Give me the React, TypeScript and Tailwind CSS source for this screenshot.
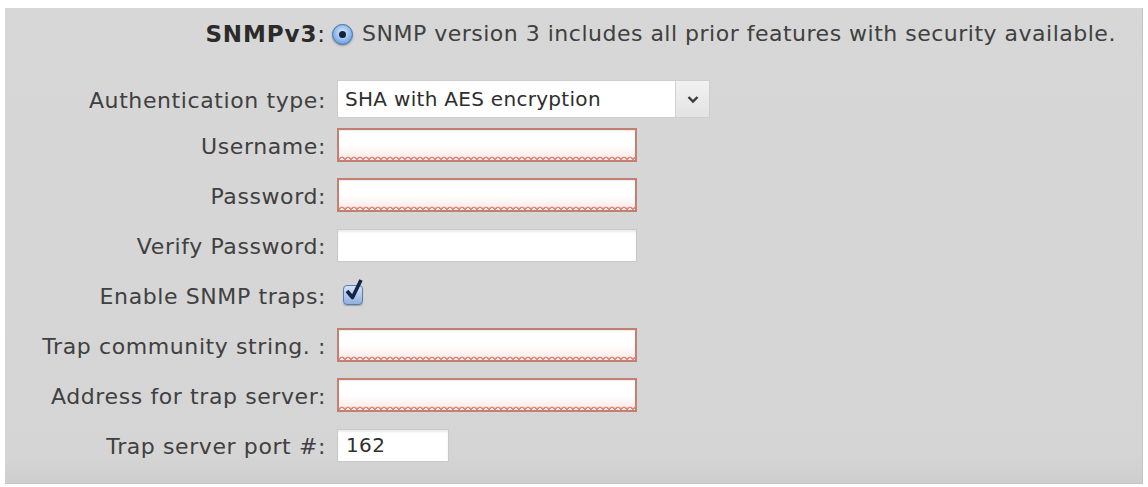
import type { ReactNode } from 'react';

const font = "font-['DejaVu_Sans','Liberation_Sans',sans-serif]";

function Label({ children }: { children: ReactNode }) {
  return (
    <div className="flex justify-end pt-[4px] text-[22px] leading-none tracking-[0.6px] text-[#404040] whitespace-nowrap">
      {children}
    </div>
  );
}

function InvalidInput() {
  return (
    <div className="relative h-[34px] w-[300px] border-2 border-[#c47f73] bg-[linear-gradient(to_bottom,#ffffff_50%,#fbe9e7_100%)] shadow-[inset_0_1px_1px_rgba(0,0,0,0.08)]">
      <input
        readOnly
        className="h-full w-full bg-transparent px-2 outline-none"
        aria-invalid="true"
      />
      <div className="absolute inset-x-0 bottom-0 h-[5px] bg-[radial-gradient(circle_at_50%_100%,transparent_1.8px,#e07d6d_2px,#e07d6d_3.4px,transparent_3.6px)] bg-[length:6px_5px] opacity-90" />
    </div>
  );
}

function PlainInput({ value, width }: { value?: string; width: string }) {
  return (
    <div className={`h-[33px] ${width} border border-[#c9c9c9] bg-white shadow-[inset_0_2px_2px_rgba(0,0,0,0.08)]`}>
      <input
        readOnly
        value={value ?? ''}
        className={`h-full w-full bg-transparent px-2 text-[20px] tracking-[0.4px] text-[#303030] outline-none ${font}`}
      />
    </div>
  );
}

function Row({ label, children }: { label: ReactNode; children: ReactNode }) {
  return (
    <div className="grid h-[50px] grid-cols-[321px_1fr] items-center gap-x-[11px]">
      <Label>{label}</Label>
      <div className="flex items-center">{children}</div>
    </div>
  );
}

export default function App() {
  return (
    <div className={`h-[487px] w-[1148px] bg-white px-[5px] pt-[8px] ${font}`}>
      <div className="h-[476px] border-r border-b border-[#c4c4c4] bg-[linear-gradient(to_bottom,#d7d7d7_0%,#d5d5d5_94%,#cecece_100%)] pt-[9px]">
        <div className="grid h-[34px] grid-cols-[321px_1fr] items-center gap-x-[6px]">
          <div className="flex justify-end text-[23px] font-bold leading-none tracking-[0.9px] text-[#2b2b2b]">
            SNMPv3<span className="font-normal">:</span>
          </div>
          <div className="flex items-center gap-[9px]">
            <div className="flex h-[21px] w-[21px] items-center justify-center rounded-full border border-[#3f6fa8] bg-[radial-gradient(circle_at_50%_40%,#dcecff_0%,#8db8ea_55%,#4a86cf_100%)] shadow-[0_1px_2px_rgba(0,0,0,0.3)]">
              <div className="h-[7px] w-[7px] rounded-full bg-[#142238]" />
            </div>
            <span className="text-[22px] leading-none tracking-[0.5px] text-[#404040] whitespace-nowrap">
              SNMP version 3 includes all prior features with security available.
            </span>
          </div>
        </div>

        <div className="mt-[29px] mb-[2px] grid h-[38px] grid-cols-[321px_1fr] items-center gap-x-[11px]">
          <Label>Authentication type:</Label>
          <div className="flex h-[38px] w-[373px] border border-[#cdcdcd] bg-white">
            <div className="flex flex-1 items-center pl-[7px] text-[20px] tracking-[0.3px] text-[#2e2e2e]">
              SHA with AES encryption
            </div>
            <div className="flex w-[34px] items-center justify-center border-l border-[#d2d2d2] bg-[linear-gradient(to_bottom,#f2f2f2,#e3e3e3)]">
              <svg width="12" height="9" viewBox="0 0 12 9">
                <path d="M1.5 2 L6 6.5 L10.5 2" fill="none" stroke="#3a3a3a" strokeWidth="2.4" />
              </svg>
            </div>
          </div>
        </div>

        <Row label="Username:">
          <InvalidInput />
        </Row>
        <Row label="Password:">
          <InvalidInput />
        </Row>
        <Row label="Verify Password:">
          <PlainInput width="w-[300px]" />
        </Row>
        <Row label="Enable SNMP traps:">
          <div className="relative ml-[6px] h-[20px] w-[20px]">
            <div className="h-[20px] w-[20px] rounded-[4px] border border-[#5a7db0] bg-[linear-gradient(to_bottom,#d5e4f6,#8fb0dc)] shadow-[0_1px_1px_rgba(0,0,0,0.25)]" />
            <svg className="absolute left-[1px] top-[-7px]" width="22" height="24" viewBox="0 0 22 24">
              <path d="M3 13 L8.5 19.5 L17 2" fill="none" stroke="#15224a" strokeWidth="3.6" strokeLinejoin="round" />
            </svg>
          </div>
        </Row>
        <Row label="Trap community string. :">
          <InvalidInput />
        </Row>
        <Row label="Address for trap server:">
          <InvalidInput />
        </Row>
        <Row label="Trap server port #:">
          <PlainInput value="162" width="w-[112px]" />
        </Row>
      </div>
    </div>
  );
}
